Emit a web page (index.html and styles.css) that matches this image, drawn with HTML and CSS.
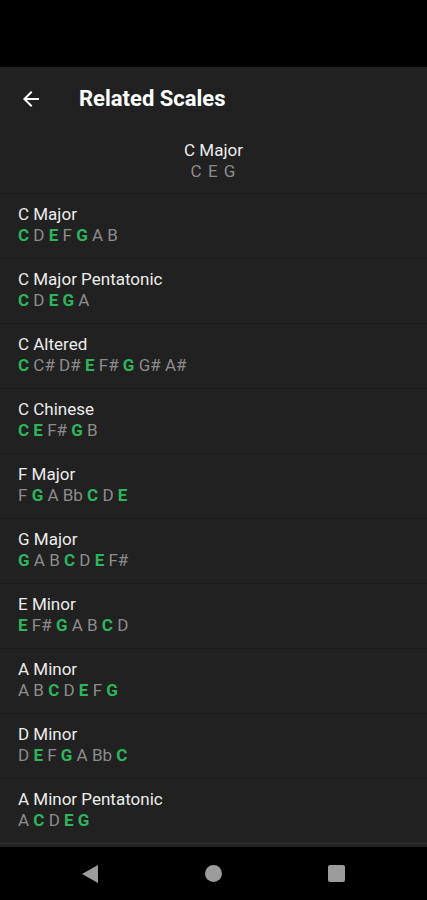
FILE: index.html
```html
<!DOCTYPE html>
<html lang="en">
<head>
  <meta charset="UTF-8">
  <meta name="viewport" content="width=device-width, initial-scale=1.0">
  <title>Related Scales</title>
  <link rel="stylesheet" href="styles.css">
</head>
<body>
  <div class="status-bar"></div>

  <header class="toolbar">
    <button class="back" aria-label="Back">
      <svg width="24" height="24" viewBox="0 0 24 24"><path d="M20 11H7.83l5.59-5.59L12 4l-8 8 8 8 1.41-1.41L7.83 13H20v-2z" fill="#fff"/></svg>
    </button>
    <h1>Related Scales</h1>
  </header>

  <div class="chord">
    <div class="name">C Major</div>
    <div class="notes"><span>C</span> <span>E</span> <span>G</span></div>
  </div>

  <ul class="scales">
    <li>
      <div class="name">C Major</div>
      <div class="notes"><b>C</b> <span>D</span> <b>E</b> <span>F</span> <b>G</b> <span>A</span> <span>B</span></div>
    </li>
    <li>
      <div class="name">C Major Pentatonic</div>
      <div class="notes"><b>C</b> <span>D</span> <b>E</b> <b>G</b> <span>A</span></div>
    </li>
    <li>
      <div class="name">C Altered</div>
      <div class="notes"><b>C</b> <span>C#</span> <span>D#</span> <b>E</b> <span>F#</span> <b>G</b> <span>G#</span> <span>A#</span></div>
    </li>
    <li>
      <div class="name">C Chinese</div>
      <div class="notes"><b>C</b> <b>E</b> <span>F#</span> <b>G</b> <span>B</span></div>
    </li>
    <li>
      <div class="name">F Major</div>
      <div class="notes"><span>F</span> <b>G</b> <span>A</span> <span>Bb</span> <b>C</b> <span>D</span> <b>E</b></div>
    </li>
    <li>
      <div class="name">G Major</div>
      <div class="notes"><b>G</b> <span>A</span> <span>B</span> <b>C</b> <span>D</span> <b>E</b> <span>F#</span></div>
    </li>
    <li>
      <div class="name">E Minor</div>
      <div class="notes"><b>E</b> <span>F#</span> <b>G</b> <span>A</span> <span>B</span> <b>C</b> <span>D</span></div>
    </li>
    <li>
      <div class="name">A Minor</div>
      <div class="notes"><span>A</span> <span>B</span> <b>C</b> <span>D</span> <b>E</b> <span>F</span> <b>G</b></div>
    </li>
    <li>
      <div class="name">D Minor</div>
      <div class="notes"><span>D</span> <b>E</b> <span>F</span> <b>G</b> <span>A</span> <span>Bb</span> <b>C</b></div>
    </li>
    <li>
      <div class="name">A Minor Pentatonic</div>
      <div class="notes"><span>A</span> <b>C</b> <span>D</span> <b>E</b> <b>G</b></div>
    </li>
  </ul>

  <nav class="nav-bar">
    <span class="nav-back"></span>
    <span class="nav-home"></span>
    <span class="nav-recent"></span>
  </nav>
</body>
</html>
```

FILE: styles.css
```css
/* Reset */
* {
  margin: 0;
  padding: 0;
  box-sizing: border-box;
  font-family: Roboto, 'Liberation Sans', sans-serif;
}

body {
  display: flex;
  flex-direction: column;
  height: 900px;
  background: #212121;
  color: #ececec;
  overflow: hidden;
}

.status-bar {
  height: 67px;
  background: #000;
}

/* Toolbar */
.toolbar {
  display: flex;
  align-items: center;
  height: 63px;
  padding-left: 19px;
}

.back {
  display: flex;
  width: 24px;
  height: 24px;
  border: none;
  background: none;
}

.toolbar h1 {
  margin-left: 36px;
  font-size: 22px;
  font-weight: 700;
  color: #fff;
}

/* Chord header */
.chord {
  height: 64px;
  padding-top: 10px;
  text-align: center;
  border-bottom: 1px solid #1a1a1a;
}

.name {
  font-size: 17px;
  line-height: 21px;
}

.notes {
  font-size: 17px;
  line-height: 21px;
  color: #8c8c8c;
}

.chord .notes {
  letter-spacing: 1px;
}

.notes b {
  font-weight: 700;
  color: #2db55d;
}

/* Scale list */
.scales {
  list-style: none;
  flex: 1;
}

.scales li {
  height: 65px;
  padding: 10px 18px 0;
  border-bottom: 1px solid #1a1a1a;
}

.scales li:last-child {
  border-bottom: 1px solid #303030;
}

/* Nav bar */
.nav-bar {
  display: flex;
  justify-content: space-between;
  align-items: center;
  height: 53px;
  padding: 0 82px;
  background: #000;
}

.nav-back {
  width: 0;
  height: 0;
  border-top: 9px solid transparent;
  border-bottom: 9px solid transparent;
  border-right: 16px solid #9c9c9c;
}

.nav-home {
  width: 17px;
  height: 17px;
  border-radius: 50%;
  background: #9c9c9c;
}

.nav-recent {
  width: 17px;
  height: 17px;
  border-radius: 2px;
  background: #9c9c9c;
}
```
